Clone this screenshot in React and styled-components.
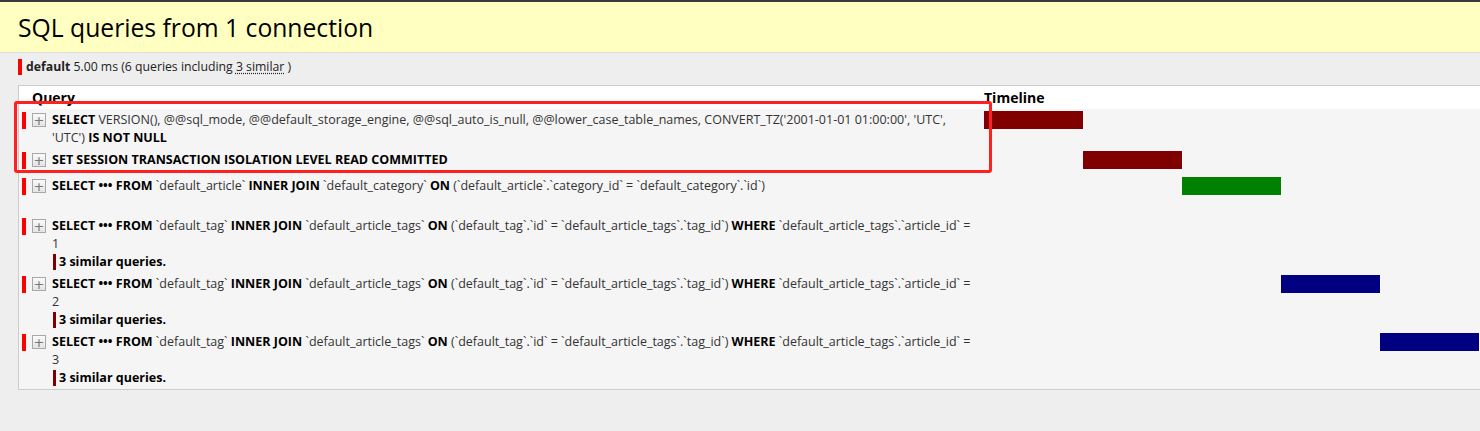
import React from 'react';
import styled, { createGlobalStyle } from 'styled-components';

const GlobalStyle = createGlobalStyle`
  html, body {
    margin: 0;
    padding: 0;
    background: #eeeeee;
  }
  body {
    font-family: 'Open Sans', 'Noto Sans', 'Liberation Sans', sans-serif;
    color: #000;
    overflow: hidden;
  }
`;

const Page = styled.div`
  position: relative;
  width: 1480px;
  height: 431px;
  overflow: hidden;
`;

const Header = styled.div`
  height: 50px;
  display: flex;
  align-items: center;
  padding-left: 18px;
  background: #ffffc2;
  border-top: 2px solid #3a3a3a;
  border-bottom: 1px solid #dddddd;
`;

const Title = styled.h3`
  margin: 0;
  font-size: 24.7px;
  font-weight: 400;
  color: #000;
`;

const Content = styled.div`
  padding: 6px 0 0 18px;
`;

const Summary = styled.div`
  font-size: 12.25px;
  line-height: 16px;
  color: #222;
  border-left: 4px solid #ff0000;
  padding-left: 4px;
`;

const Similar = styled.abbr`
  text-decoration: underline dotted;
  text-underline-offset: 2px;
  cursor: help;
`;

const Table = styled.div`
  margin-top: 10px;
  width: 1470px;
  border: 1px solid #cccccc;
  background: #f5f5f5;
`;

const Columns = `
  display: grid;
  grid-template-columns: 13px 20px 932px 1fr;
`;

const HeadRow = styled.div`
  ${Columns}
  height: 23px;
  align-items: center;
  background: #ffffff;
  font-size: 14px;
  font-weight: 700;
`;

const HeadCell = styled.div`
  grid-column: ${(p) => p.$col};
`;

const Row = styled.div`
  ${Columns}
  align-items: start;
  padding: 2px 0 ${(p) => 2 + (p.$extra || 0)}px;
  font-size: 12.5px;
  line-height: 18px;
`;

const ColorCell = styled.div`
  padding: 1px 0 0 3px;
`;

const ColorMark = styled.div`
  width: 4px;
  height: 17px;
  background: #ff0000;
`;

const Toggle = styled.span`
  display: flex;
  align-items: center;
  justify-content: center;
  box-sizing: border-box;
  width: 14px;
  height: 14px;
  margin-top: 2px;
  border: 1px solid #a8a8a8;
  background: linear-gradient(#fafafa, #e4e4e4);
  color: #777;
  font-size: 13px;
  line-height: 1;
  font-weight: 400;
  font-family: 'DejaVu Sans', sans-serif;
`;

const Sql = styled.div`
  color: #333;
  padding-right: 8px;
`;

const Kw = styled.strong`
  color: #000;
  font-weight: 700;
`;

const SimilarNote = styled.div`
  margin: 1px 0 1px 1px;
  padding-left: 3px;
  border-left: 3px solid #800000;
  font-weight: 700;
  color: #000;
  line-height: 16px;
`;

const Timeline = styled.div`
  position: relative;
  height: 18px;
`;

const Bar = styled.div`
  position: absolute;
  top: 0;
  height: 18px;
  background: ${(p) => p.$color};
  box-shadow: 1px 0 0 rgba(255, 255, 255, 0.6);
`;

const Highlight = styled.div`
  position: absolute;
  left: 14px;
  top: 101px;
  width: 972px;
  height: 66px;
  border: 3px solid #ff2020;
  border-radius: 3px;
  pointer-events: none;
`;

const tagSql = (n) => (
  <>
    <Kw>SELECT</Kw> <Kw>•••</Kw> <Kw>FROM</Kw> `default_tag` <Kw>INNER JOIN</Kw>{' '}
    `default_article_tags` <Kw>ON</Kw> (`default_tag`.`id` = `default_article_tags`.`tag_id`){' '}
    <Kw>WHERE</Kw> `default_article_tags`.`article_id` = {n}
  </>
);

const TOTAL = 5;
const WIDTH = 495;

const queries = [
  {
    sql: (
      <>
        <Kw>SELECT</Kw> VERSION(), @@sql_mode, @@default_storage_engine, @@sql_auto_is_null,
        @@lower_case_table_names, CONVERT_TZ('2001-01-01 01:00:00', 'UTC', 'UTC'){' '}
        <Kw>IS NOT NULL</Kw>
      </>
    ),
    start: 0,
    dur: 1,
    color: '#800000',
  },
  {
    sql: <Kw>SET SESSION TRANSACTION ISOLATION LEVEL READ COMMITTED</Kw>,
    start: 1,
    dur: 1,
    color: '#800000',
    extra: 4,
  },
  {
    sql: (
      <>
        <Kw>SELECT</Kw> <Kw>•••</Kw> <Kw>FROM</Kw> `default_article` <Kw>INNER JOIN</Kw>{' '}
        `default_category` <Kw>ON</Kw> (`default_article`.`category_id` = `default_category`.`id`)
      </>
    ),
    start: 2,
    dur: 1,
    color: '#008000',
    extra: 18,
  },
  { sql: tagSql(1), start: 3, dur: 0, color: '#000080', similar: 3 },
  { sql: tagSql(2), start: 3, dur: 1, color: '#000080', similar: 3 },
  { sql: tagSql(3), start: 4, dur: 1, color: '#000080', similar: 3 },
];

const App = () => (
  <Page>
    <GlobalStyle />
    <Header>
      <Title>SQL queries from 1 connection</Title>
    </Header>
    <Content>
      <Summary>
        <strong>default</strong> 5.00 ms (6 queries including <Similar>3 similar</Similar> )
      </Summary>
      <Table>
        <HeadRow>
          <HeadCell $col="2 / 4">Query</HeadCell>
          <HeadCell $col="4">Timeline</HeadCell>
        </HeadRow>
        {queries.map((q, i) => (
          <Row key={i} $extra={q.extra}>
            <ColorCell>
              <ColorMark />
            </ColorCell>
            <Toggle>+</Toggle>
            <Sql>
              {q.sql}
              {q.similar && <SimilarNote>{q.similar} similar queries.</SimilarNote>}
            </Sql>
            <Timeline>
              {q.dur > 0 && (
                <Bar
                  $color={q.color}
                  style={{
                    left: `${(q.start / TOTAL) * WIDTH}px`,
                    width: `${(q.dur / TOTAL) * WIDTH}px`,
                  }}
                />
              )}
            </Timeline>
          </Row>
        ))}
      </Table>
    </Content>
    <Highlight />
  </Page>
);

export default App;
